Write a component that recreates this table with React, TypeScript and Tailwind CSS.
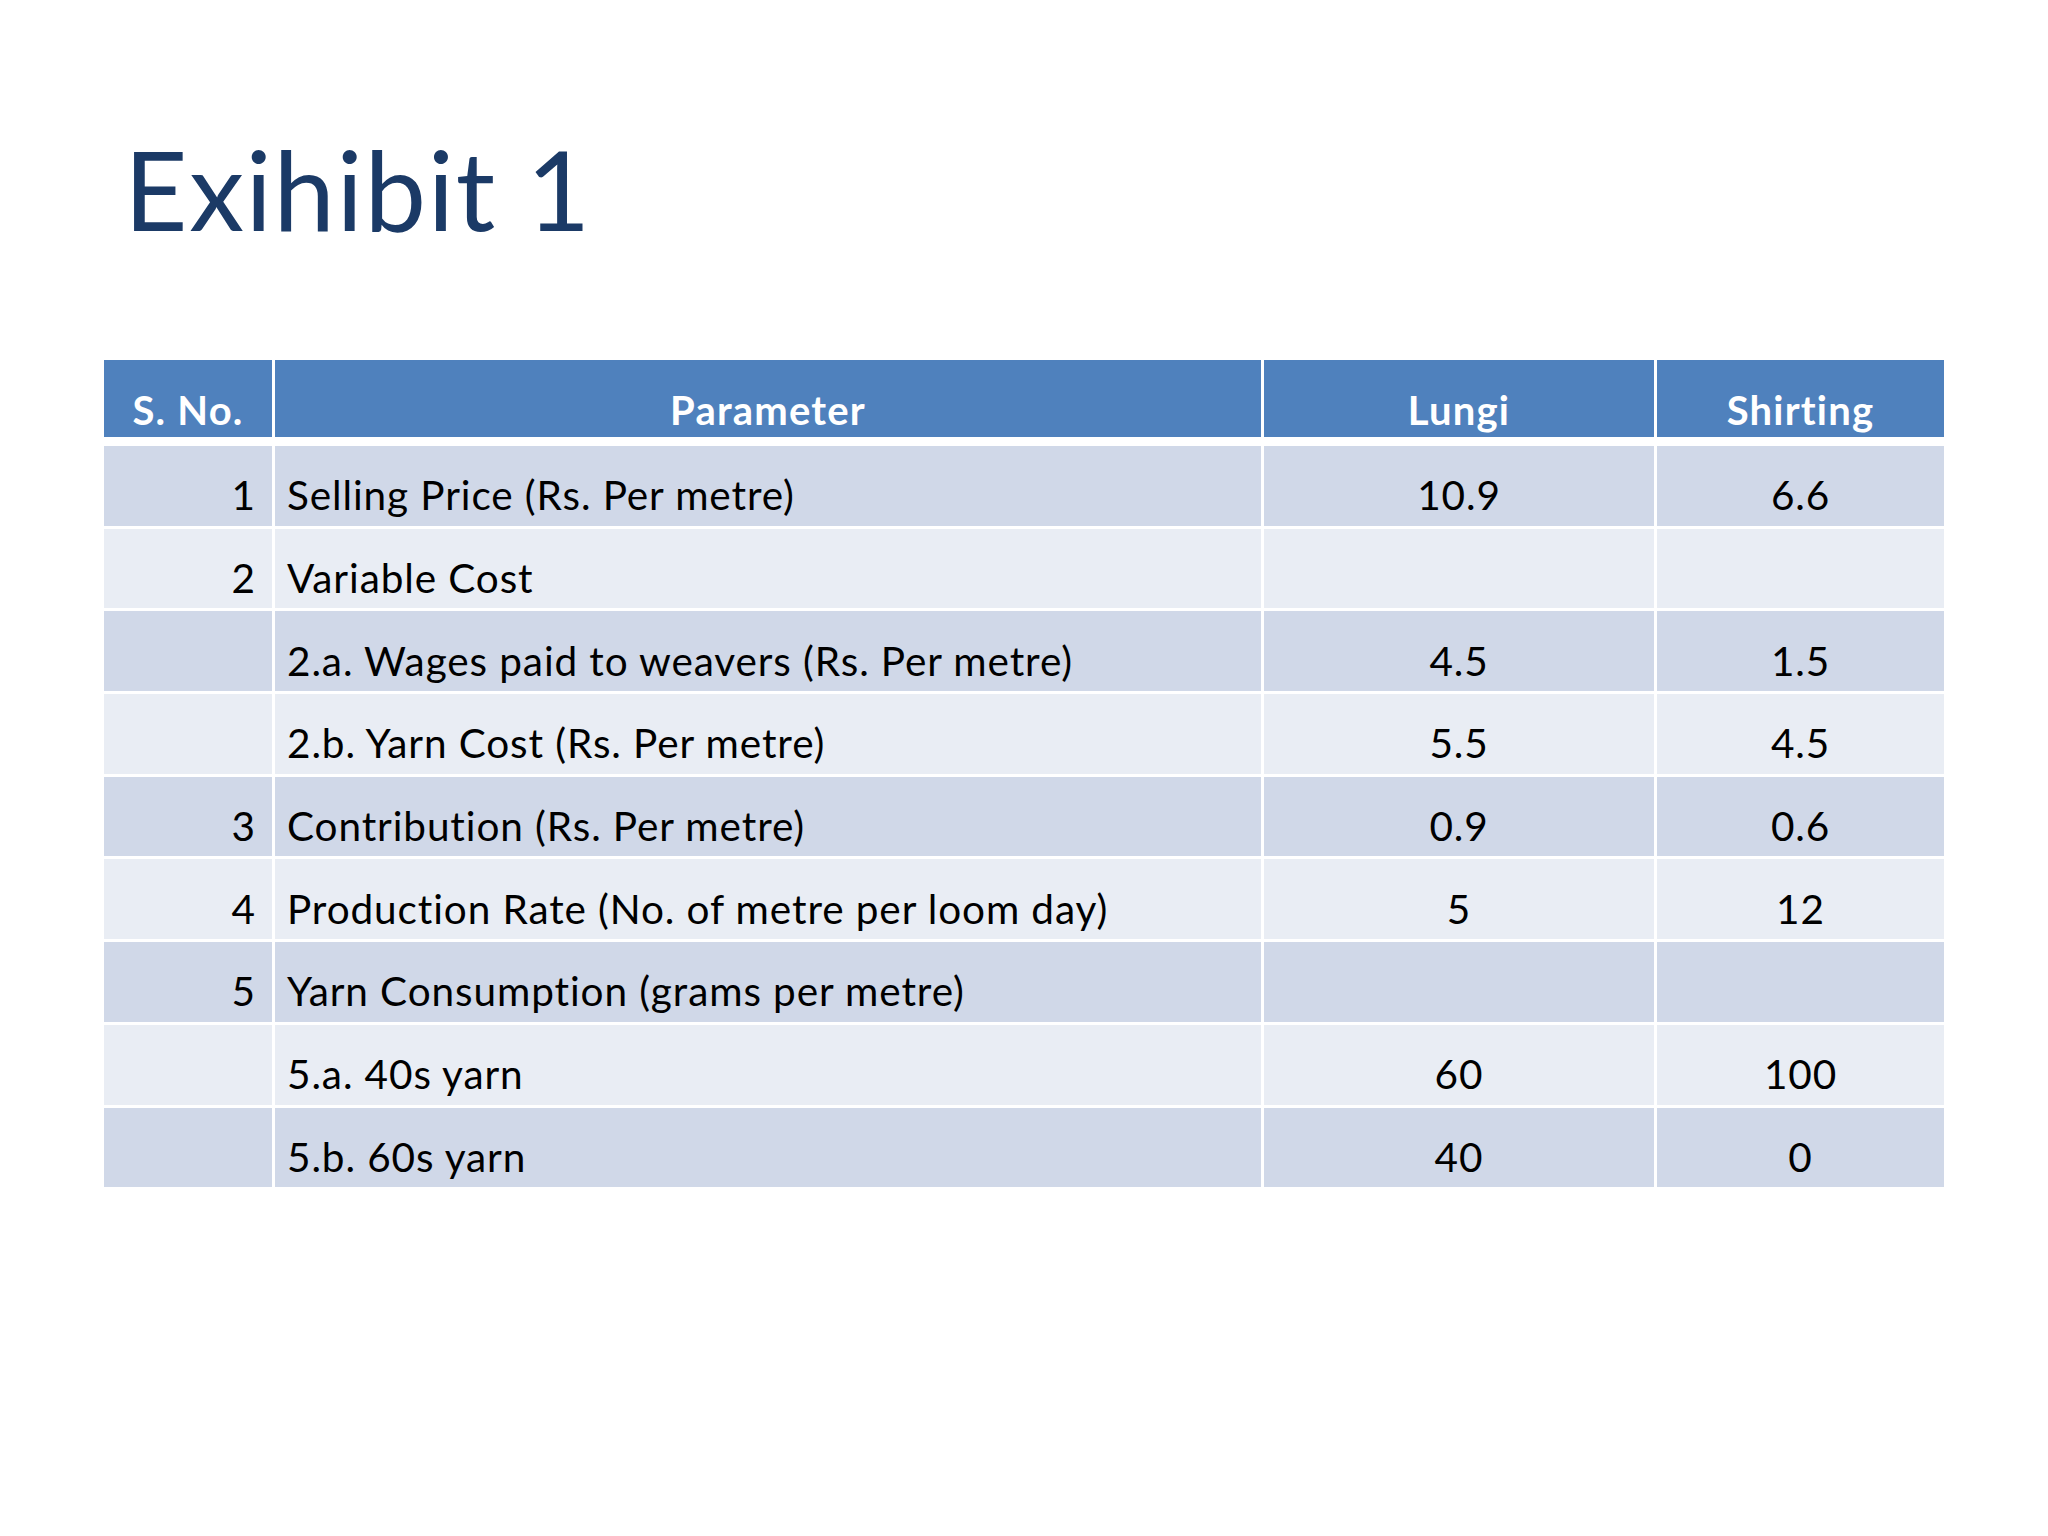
const rows: { no: string; param: string; lungi: string; shirting: string }[] = [
  { no: "1", param: "Selling Price (Rs. Per metre)", lungi: "10.9", shirting: "6.6" },
  { no: "2", param: "Variable Cost", lungi: "", shirting: "" },
  { no: "", param: "2.a. Wages paid to weavers (Rs. Per metre)", lungi: "4.5", shirting: "1.5" },
  { no: "", param: "2.b. Yarn Cost (Rs. Per metre)", lungi: "5.5", shirting: "4.5" },
  { no: "3", param: "Contribution (Rs. Per metre)", lungi: "0.9", shirting: "0.6" },
  { no: "4", param: "Production Rate (No. of metre per loom day)", lungi: "5", shirting: "12" },
  { no: "5", param: "Yarn Consumption (grams per metre)", lungi: "", shirting: "" },
  { no: "", param: "5.a. 40s yarn", lungi: "60", shirting: "100" },
  { no: "", param: "5.b. 60s yarn", lungi: "40", shirting: "0" },
];

const cols = "grid grid-cols-[168px_986px_390px_287px] gap-x-[3px]";

export default function App() {
  return (
    <div className="min-h-screen w-[2048px] h-[1536px] bg-white font-['Lato','Carlito',sans-serif]">
      <div className="pt-[133px] pl-[124px]">
        <h1 className="text-[110px] leading-none font-normal tracking-[1.6px] text-[#1b3a66]">Exihibit 1</h1>
      </div>

      <div className="mt-[117px] ml-[104px] w-[1840px]">
        <div className={`${cols} h-[77px]`}>
          {["S. No.", "Parameter", "Lungi", "Shirting"].map((h) => (
            <div
              key={h}
              className="flex items-end justify-center bg-[#4f81bd] pb-[7px] text-[40px] leading-none font-bold tracking-[1.2px] text-white"
            >
              {h}
            </div>
          ))}
        </div>

        <div className="mt-[9px] flex flex-col gap-y-[3px]">
          {rows.map((r, i) => {
            const bg = i % 2 === 0 ? "bg-[#d0d8e8]" : "bg-[#e9edf4]";
            return (
              <div key={i} className={`${cols} h-[79.7px] text-[40.5px] leading-none tracking-[0.9px] text-black`}>
                <div className={`${bg} flex items-end justify-end pr-[16px] pb-[10px]`}>{r.no}</div>
                <div className={`${bg} flex items-end pl-[12px] pb-[10px]`}>{r.param}</div>
                <div className={`${bg} flex items-end justify-center pb-[10px]`}>{r.lungi}</div>
                <div className={`${bg} flex items-end justify-center pb-[10px]`}>{r.shirting}</div>
              </div>
            );
          })}
        </div>
      </div>
    </div>
  );
}
